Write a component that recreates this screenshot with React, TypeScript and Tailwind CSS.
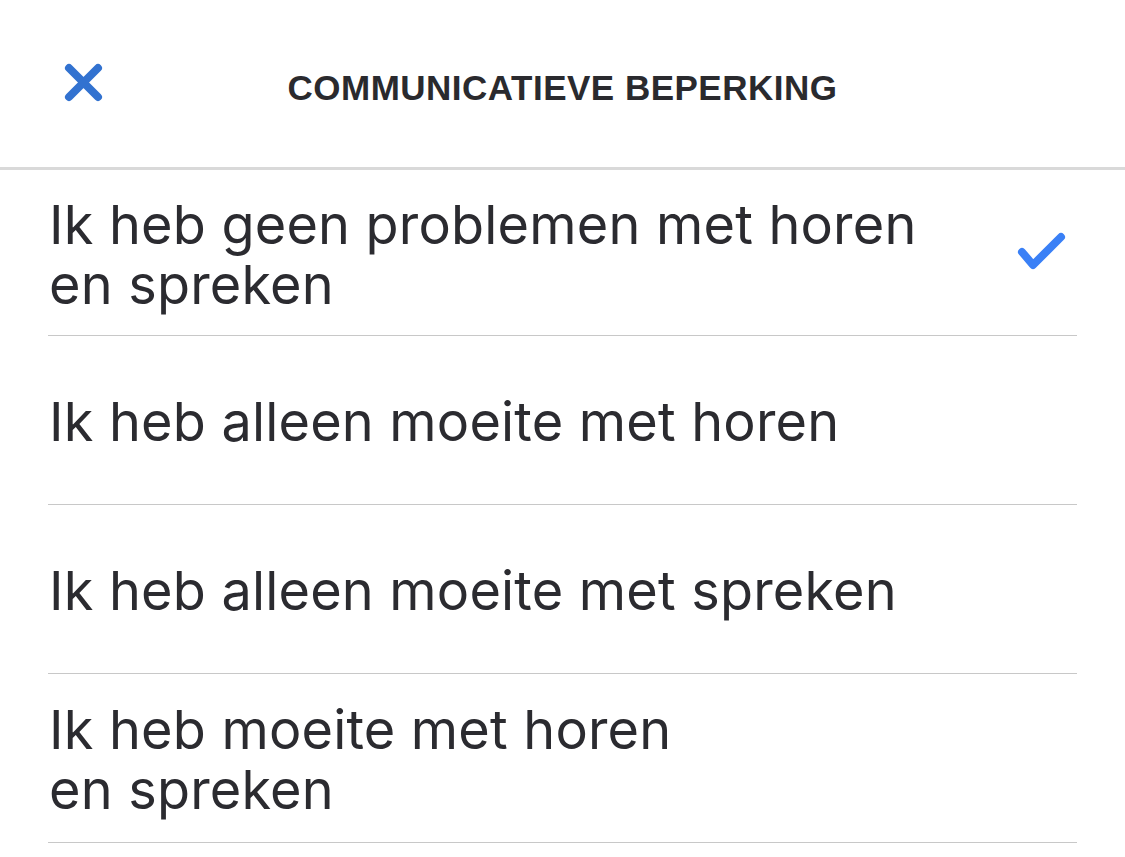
import React from 'react';

const options: { id: string; lines: string[] }[] = [
  { id: 'none', lines: ['Ik heb geen problemen met horen', 'en spreken'] },
  { id: 'hearing', lines: ['Ik heb alleen moeite met horen'] },
  { id: 'speaking', lines: ['Ik heb alleen moeite met spreken'] },
  { id: 'both', lines: ['Ik heb moeite met horen', 'en spreken'] },
];

const CloseIcon = () => (
  <svg width="44" height="44" viewBox="0 0 44 44" fill="none">
    <path d="M7 7L36 36M36 7L7 36" stroke="#3272d0" strokeWidth="8" strokeLinecap="round" />
  </svg>
);

const CheckIcon = () => (
  <svg width="56" height="44" viewBox="0 0 56 44" fill="none">
    <path d="M10 22L21 35L49 7" stroke="#3a80f6" strokeWidth="8" strokeLinecap="round" strokeLinejoin="round" />
  </svg>
);

export default function App() {
  const selected = 'none';

  return (
    <div className="w-[1125px] h-[857px] bg-white overflow-hidden" style={{ fontFamily: 'Inter, Roboto, "Liberation Sans", sans-serif' }}>
      <header className="relative h-[170px] border-b-[3px] border-[#d9d9d9] flex items-center justify-center">
        <button className="absolute left-[62px] top-[61px]">
          <CloseIcon />
        </button>
        <h1
          className="text-[35px] font-bold text-[#2a2a2e] tracking-[0.5px] pt-[10px]"
          style={{ fontFamily: '"Liberation Sans", Arial, sans-serif' }}
        >
          COMMUNICATIEVE BEPERKING
        </h1>
      </header>

      <ul>
        {options.map((opt, i) => (
          <li
            key={opt.id}
            className={`mx-[48px] flex items-center justify-between border-b border-[#c8c8c8] ${i === 0 ? 'h-[166px]' : 'h-[169px]'}`}
          >
            <span className="text-[54px] leading-[60px] text-[#2b2b30] tracking-[0.2px] pl-[1px] pt-[4px]">
              {opt.lines.map((l, j) => (
                <React.Fragment key={j}>
                  {j > 0 && <br />}
                  {l}
                </React.Fragment>
              ))}
            </span>
            {opt.id === selected && (
              <span className="mr-[9px] mt-[-2px]">
                <CheckIcon />
              </span>
            )}
          </li>
        ))}
      </ul>
    </div>
  );
}
